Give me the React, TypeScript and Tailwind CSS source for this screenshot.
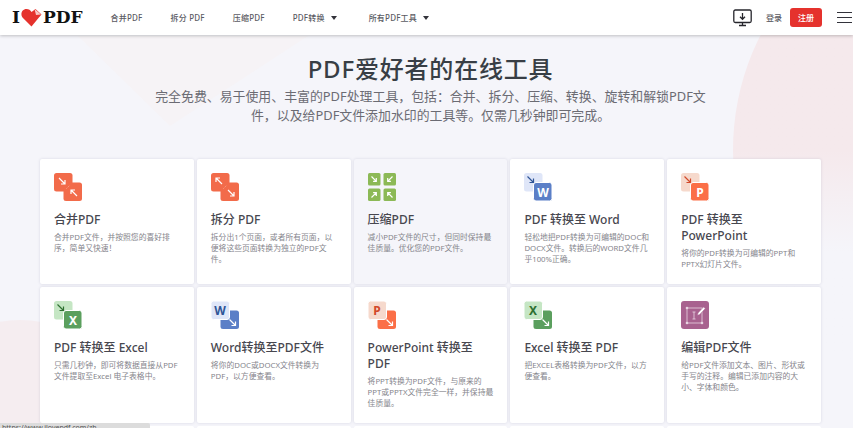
import type { ReactNode } from "react"

type Tool = { title: string; desc: string; icon: ReactNode; bg?: string }

// small diagonal arrow, (x,y) is the tail and (dx,dy) the direction
function Arrow({ x, y, dx, dy, color = "#fff" }: { x: number; y: number; dx: number; dy: number; color?: string }) {
  const tx = x + dx * 6
  const ty = y + dy * 6
  return (
    <path
      d={`M${x} ${y}L${tx} ${ty}M${tx - dx * 4} ${ty}H${tx}V${ty - dy * 4}`}
      fill="none"
      stroke={color}
      strokeWidth="1.2"
    />
  )
}

function Icon({ children }: { children: ReactNode }) {
  return (
    <svg width="28" height="28" viewBox="0 0 28 28" className="block">
      {children}
    </svg>
  )
}

function letterText(letter: string, x: number, y: number, color: string) {
  return (
    <text x={x} y={y} textAnchor="middle" fontSize="12" fontWeight="700" fontFamily="'Noto Sans', sans-serif" fill={color}>
      {letter}
    </text>
  )
}

// PDF to office: arrow on the pale square, letter on the solid one
function ToOffice({ back, front, letter, arrow }: { back: string; front: string; letter: string; arrow: string }) {
  return (
    <Icon>
      <rect x="0" y="0" width="18.5" height="18.5" rx="2.5" fill={back} />
      <rect x="9.5" y="9.5" width="18.5" height="18.5" rx="2.5" fill={front} stroke="#fff" strokeWidth="1" />
      <Arrow x={3.5} y={3.5} dx={1} dy={1} color={arrow} />
      {letterText(letter, 19, 23.5, "#fff")}
    </Icon>
  )
}

// office to PDF: pale square with the letter lies on top
function FromOffice({ back, front, letter, letterColor }: { back: string; front: string; letter: string; letterColor: string }) {
  return (
    <Icon>
      <rect x="9.5" y="9.5" width="18.5" height="18.5" rx="2.5" fill={front} />
      <rect x="0" y="0" width="18.5" height="18.5" rx="2.5" fill={back} stroke="#fff" strokeWidth="1" />
      <Arrow x={18.5} y={18.5} dx={1} dy={1} />
      {letterText(letter, 9, 14, letterColor)}
    </Icon>
  )
}

function MergeIcon({ split }: { split?: boolean }) {
  return (
    <Icon>
      <rect x="0" y="0" width="18.5" height="18.5" rx="2.5" fill="#f26b4a" />
      <rect x="9.5" y="9.5" width="18.5" height="18.5" rx="2.5" fill="#f26b4a" />
      <path d="M12.5 15.5l3-3" stroke="#fbc9b9" strokeWidth="0.7" strokeDasharray="1 1" />
      {split ? (
        <>
          <Arrow x={11} y={11} dx={-1} dy={-1} />
          <Arrow x={17} y={17} dx={1} dy={1} />
        </>
      ) : (
        <>
          <Arrow x={5} y={5} dx={1} dy={1} />
          <Arrow x={23} y={23} dx={-1} dy={-1} />
        </>
      )}
    </Icon>
  )
}

function CompressIcon() {
  return (
    <Icon>
      <rect x="0" y="0" width="12.5" height="12.5" rx="1.5" fill="#8cb956" />
      <rect x="15.5" y="0" width="12.5" height="12.5" rx="1.5" fill="#8cb956" />
      <rect x="0" y="15.5" width="12.5" height="12.5" rx="1.5" fill="#8cb956" />
      <rect x="15.5" y="15.5" width="12.5" height="12.5" rx="1.5" fill="#8cb956" />
      <Arrow x={3.5} y={3.5} dx={0.8} dy={0.8} />
      <Arrow x={24.5} y={3.5} dx={-0.8} dy={0.8} />
      <Arrow x={3.5} y={24.5} dx={0.8} dy={-0.8} />
      <Arrow x={24.5} y={24.5} dx={-0.8} dy={-0.8} />
    </Icon>
  )
}

function EditIcon() {
  return (
    <Icon>
      <rect width="28" height="28" rx="3" fill="#a8628f" />
      <rect x="6" y="7" width="15" height="15" fill="none" stroke="#e8d5e2" strokeWidth="0.8" />
      <circle cx="6" cy="7" r="1.3" fill="#e8d5e2" />
      <circle cx="6" cy="22" r="1.3" fill="#e8d5e2" />
      <circle cx="21" cy="22" r="1.3" fill="#e8d5e2" />
      <path d="M11.5 11h3M11.5 18h3M13 11v7" stroke="#e8d5e2" strokeWidth="0.8" fill="none" />
      <path d="M17 12l5.5-6 1.8 1.6-5.6 6-2.3.6z" fill="#fff" stroke="#a8628f" strokeWidth="0.5" />
    </Icon>
  )
}

const tools: Tool[] = [
  { title: "合并PDF", desc: "合并PDF文件\uFF0C并按照您的喜好排序\uFF0C简单又快速\uFF01", icon: <MergeIcon /> },
  { title: "拆分 PDF", desc: "拆分出1个页面\uFF0C或者所有页面\uFF0C以便将这些页面转换为独立的PDF文件。", icon: <MergeIcon split /> },
  { title: "压缩PDF", desc: "减小PDF文件的尺寸\uFF0C但同时保持最佳质量。优化您的PDF文件。", icon: <CompressIcon />, bg: "bg-[#f5f5fa]" },
  {
    title: "PDF 转换至 Word",
    desc: "轻松地把PDF转换为可编辑的DOC和DOCX文件。转换后的WORD文件几乎100%正确。",
    icon: <ToOffice back="#dfe6f8" front="#5b7fc7" letter="W" arrow="#2f5597" />,
  },
  {
    title: "PDF 转换至 PowerPoint",
    desc: "将你的PDF转换为可编辑的PPT和PPTX幻灯片文件。",
    icon: <ToOffice back="#f6d9cc" front="#fb6f47" letter="P" arrow="#d2492a" />,
  },
  {
    title: "PDF 转换至 Excel",
    desc: "只需几秒钟\uFF0C即可将数据直接从PDF文件提取至Excel 电子表格中。",
    icon: <ToOffice back="#c5e6c4" front="#5b9f5e" letter="X" arrow="#2e7031" />,
  },
  {
    title: "Word转换至PDF文件",
    desc: "将你的DOC或DOCX文件转换为PDF\uFF0C以方便查看。",
    icon: <FromOffice back="#dfe6f8" front="#5b7fc7" letter="W" letterColor="#2f5597" />,
  },
  {
    title: "PowerPoint 转换至 PDF",
    desc: "将PPT转换为PDF文件\uFF0C与原来的PPT或PPTX文件完全一样\uFF0C并保持最佳质量。",
    icon: <FromOffice back="#f6d9cc" front="#fb6f47" letter="P" letterColor="#d2492a" />,
  },
  {
    title: "Excel 转换至 PDF",
    desc: "把EXCEL表格转换为PDF文件\uFF0C以方便查看。",
    icon: <FromOffice back="#c5e6c4" front="#5b9f5e" letter="X" letterColor="#2e7031" />,
  },
  { title: "编辑PDF文件", desc: "给PDF文件添加文本、图片、形状或手写的注释。编辑已添加内容的大小、字体和颜色。", icon: <EditIcon /> },
]

const intro =
  "完全免费、易于使用、丰富的PDF处理工具\uFF0C包括\uFF1A合并、拆分、压缩、转换、旋转和解锁PDF文件\uFF0C以及给PDF文件添加水印的工具等。仅需几秒钟即可完成。"

function Logo() {
  return (
    <div className="flex items-center font-['DejaVu_Serif',serif] text-[17px] font-bold leading-none text-[#111]">
      <span>I</span>
      <svg width="21" height="19" viewBox="0 0 21 19" className="mx-[1px]">
        <path d="M10.5 18.5L1.5 9.5C-1 6 1 1 5.5 1c2.2 0 4 1.2 5 3l4-3 6 5.5-3 3.5z" fill="#e5322d" />
        <path d="M13.5 1l6.5 5.5-5 .5z" fill="#f7c9c7" />
      </svg>
      <span>PDF</span>
    </div>
  )
}

function MenuItem({ label, caret }: { label: string; caret?: boolean }) {
  return (
    <span className={`flex items-center gap-[6px] text-[8px] font-medium tracking-[0.2px] text-[#5b5b63] ${caret ? "pr-[4px]" : ""}`}>
      {label}
      {caret && <span className="h-0 w-0 border-x-[3px] border-t-[4px] border-x-transparent border-t-[#33333b]" />}
    </span>
  )
}

export default function App() {
  return (
    <div className="relative h-[428px] w-[853px] overflow-hidden bg-[#f5f5fa] font-['Noto_Sans','Noto_Sans_CJK_SC',sans-serif]">

      {/* background shapes */}
      <div className="absolute left-[78px] top-[36px] h-[90px] w-[230px] bg-[#f6f3f6] [clip-path:polygon(0_0,100%_0,40%_100%)]" />
      <div className="absolute left-[733px] top-[-104px] h-[508px] w-[508px] rounded-full bg-gradient-to-b from-[#f5e9ec] from-50% to-[#f5f5fa] to-70%" />
      <div className="absolute left-[-90px] top-[320px] h-[220px] w-[220px] rounded-full bg-[#f5edf0]" />

      {/* HEADER */}
      <header className="relative flex h-[35px] items-center bg-white pl-3 shadow-[0_1px_3px_rgba(0,0,0,0.22)]">
        <Logo />
        <nav className="ml-[28px] flex items-center gap-[28px]">
          <MenuItem label="合并PDF" />
          <MenuItem label="拆分 PDF" />
          <MenuItem label="压缩PDF" />
          <MenuItem label="PDF转换" caret />
          <MenuItem label="所有PDF工具" caret />
        </nav>
        <div className="ml-auto flex items-center">
          <svg width="19" height="18" viewBox="0 0 19 18" fill="none" stroke="#26262c" strokeWidth="1.3">
            <rect x="0.8" y="1" width="17.4" height="12.5" rx="1.5" />
            <path d="M9.5 4v6M7 7.8l2.5 2.5L12 7.8M6 16.5h7M9.5 13.5v3" />
          </svg>
          <span className="ml-[14px] text-[8px] font-medium text-[#5b5b63]">登录</span>
          <span className="ml-2 flex h-[19px] w-[32px] items-center justify-center rounded-[3px] bg-[#e5322d] text-[8px] font-medium text-white">注册</span>
          <div className="ml-[15px] mr-[1px] flex w-[15px] flex-col gap-[3.5px]">
            <span className="h-[1.3px] bg-[#33333b]" />
            <span className="h-[1.3px] bg-[#33333b]" />
            <span className="h-[1.3px] bg-[#33333b]" />
          </div>
        </div>
      </header>

      {/* HERO + GRID */}
      <main className="relative ml-10 w-[781px]">
        <h1 className="mt-[17px] text-center text-[24px] font-medium leading-[34px] tracking-[0.8px] text-[#383e45]">
          PDF爱好者的在线工具
        </h1>
        <p className="mx-auto mt-[1px] w-[560px] text-center text-[12.9px] leading-[19px] text-[#6b6b73]">{intro}</p>

        <div className="mt-[34px] grid grid-cols-5 gap-[3px]">
          {tools.map((tool) => (
            <div key={tool.title} className={`rounded-[2px] p-[14px] shadow-[0_0_3px_rgba(70,70,110,0.16)] ${tool.bg ?? "bg-white"}`}>
              {tool.icon}
              <h3 className="mt-[11px] text-[12px] font-medium leading-[16px] text-[#47474f]">{tool.title}</h3>
              <p className="mt-[4px] text-[7.8px] leading-[11px] text-[#85858c]">{tool.desc}</p>
            </div>
          ))}
          <div className="h-[100px] rounded-[2px] bg-white" />
          <div className="h-[100px] rounded-[2px] bg-white" />
          <div className="h-[100px] rounded-[2px] bg-white" />
          <div className="h-[100px] rounded-[2px] bg-white" />
          <div className="h-[100px] rounded-[2px] bg-white" />
        </div>
      </main>

      {/* browser status bar */}
      <div className="absolute bottom-0 left-0 h-[5px] w-[150px] overflow-hidden rounded-tr-[2px] bg-[#dcdcdc] pl-[2px] text-[7px] leading-[9px] text-[#555]">
        https://www.ilovepdf.com/zh-cn/compress_pdf
      </div>
    </div>
  )
}
